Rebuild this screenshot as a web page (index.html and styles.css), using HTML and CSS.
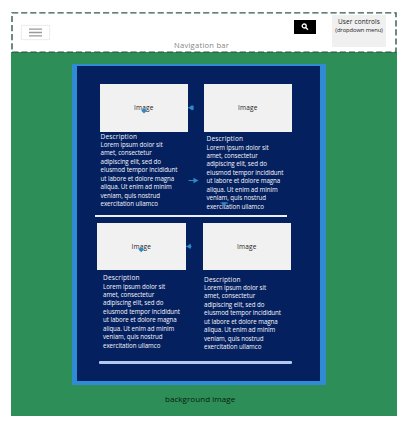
FILE: index.html
```html
<!DOCTYPE html>
<html lang="en">
<head>
<meta charset="utf-8">
<title>Page wireframe</title>
<link rel="stylesheet" href="styles.css">
</head>
<body>
<div class="page">
  <header class="nav">
    <svg class="outline" width="386" height="41" viewBox="0 0 386 41"><rect x="1" y=".9" width="384" height="39.2"/></svg>
    <div class="menu"><svg width="13" height="9" viewBox="0 0 13 9"><path d="M0 1.200h13M0 4.500h13M0 7.800h13"/></svg></div>
    <span class="nav-title">Navigation bar</span>
    <div class="search"><svg width="8" height="8" viewBox="0 0 8 8"><circle cx="3.2" cy="3" r="2"/><path d="M4.7 4.5 7 6.7"/></svg></div>
    <div class="user"><b>User controls</b><small>(dropdown menu)</small></div>
  </header>
  <main class="backdrop">
    <section class="panel">
      <div class="row first">
        <article class="card">
          <div class="image">Image</div>
          <div class="copy"><h2>Description</h2><p>Lorem ipsum dolor sit<br>amet, consectetur<br>adipiscing elit, sed do<br>eiusmod tempor incididunt<br>ut labore et dolore magna<br>aliqua. Ut enim ad minim<br>veniam, quis nostrud<br>exercitation ullamco</p></div>
        </article>
        <article class="card">
          <div class="image">Image</div>
          <div class="copy"><h2>Description</h2><p>Lorem ipsum dolor sit<br>amet, consectetur<br>adipiscing elit, sed do<br>eiusmod tempor incididunt<br>ut labore et dolore magna<br>aliqua. Ut enim ad minim<br>veniam, quis nostrud<br>exercitation ullamco</p></div>
        </article>
      </div>
      <div class="rule"></div>
      <div class="row second">
        <article class="card">
          <div class="image">Image</div>
          <div class="copy"><h2>Description</h2><p>Lorem ipsum dolor sit<br>amet, consectetur<br>adipiscing elit, sed do<br>eiusmod tempor incididunt<br>ut labore et dolore magna<br>aliqua. Ut enim ad minim<br>veniam, quis nostrud<br>exercitation ullamco</p></div>
        </article>
        <article class="card">
          <div class="image">Image</div>
          <div class="copy"><h2>Description</h2><p>Lorem ipsum dolor sit<br>amet, consectetur<br>adipiscing elit, sed do<br>eiusmod tempor incididunt<br>ut labore et dolore magna<br>aliqua. Ut enim ad minim<br>veniam, quis nostrud<br>exercitation ullamco</p></div>
        </article>
      </div>
      <div class="rule last"></div>
      <svg class="arrows" width="243" height="315" viewBox="77 66 243 315">
        <path d="M188 107.700h5.500M186 246.400h5.500M188.500 180.500h6M144 108v2M141 247v2M220.500 203h7.500"/>
        <path class="head" d="m188.500 107.700 3-2.200h2v4.400h-2zM186.500 246.400l3-2.200h1.500v4.400h-1.500zM193.500 177.800l5 2.700-5 2.700zM141.300 110.800l1.200-1.500h3l1.200 1.500-2.700 2.700zM138.500 249.600l1.200-1.500h3l1.200 1.500-2.700 2.700zM221.500 202.500h5.500l-2.500 3.500z"/>
      </svg>
    </section>
    <div class="caption">background image</div>
  </main>
</div>
</body>
</html>
```
FILE: styles.css
```css
* { box-sizing: border-box; }
body { margin: 0; background: #fff; font-family: "Open Sans", sans-serif; }
.page { width: 386px; margin: 11.5px 0 0 11px; }
.nav { position: relative; height: 40.500px; display: flex; align-items: flex-start; background: #fff; }
.outline { position: absolute; left: 0; top: 0; z-index: 1; }
.outline rect { fill: none; stroke: #305b48; stroke-width: 1.4; stroke-dasharray: 6.2 2.9; }
.menu { width: 29px; height: 15px; margin: 13.500px 0 0 9.500px; border: 1px solid #eee; display: flex; align-items: center; justify-content: center; box-shadow: 0 0 1px #eee; }
.menu svg { stroke: #999; stroke-width: 1.300; }
.nav-title { width: 60px; margin: 28px 0 0 124.500px; font-size: 7.600px; line-height: 11px; letter-spacing: .24px; color: #858585; white-space: nowrap; }
.search { width: 22px; height: 14px; margin: 8.500px 0 0 60px; background: #000; display: flex; align-items: center; justify-content: center; }
.search svg { fill: none; stroke: #fff; stroke-width: 1.3; }
.user { width: 54px; height: 32px; margin: 3.500px 0 0 16px; padding-top: 2px; background: #f0f0f0; text-align: center; color: #222; white-space: nowrap; }
.user b, .user small { display: block; font-weight: 400; }
.user b { font-size: 6.500px; line-height: 9px; letter-spacing: .12px; }
.user small { font-size: 5.800px; line-height: 8px; letter-spacing: -.08px; }
.backdrop { width: 385.500px; height: 364px; padding: 12px 0 0 61px; background: #2d8e57; }
.panel { position: relative; width: 254px; height: 321px; padding-top: 18px; background: #04205f; border: solid #308bd5; border-width: 2px 6px 4px 5px; }
.row { display: flex; gap: 15.500px; }
.first { height: 131px; margin-left: 22.500px; }
.second { height: 138.500px; margin: 5.500px 0 0 20px; gap: 17px; }
.card { width: 88.500px; flex: none; }
.image { height: 47.500px; background: #f1f1f1; color: #222; font-size: 6.500px; letter-spacing: .2px; display: flex; align-items: center; justify-content: center; }
.copy { padding-left: 1px; color: #f4f6fb; white-space: nowrap; }
.first .card + .card .copy { padding: 2.500px 0 0 3px; }
.second .card .copy { padding: 3px 0 0 6px; }
.second .card + .card .copy { padding: 4.500px 0 0 1.500px; }
h2 { margin: 0; font-size: 6.500px; line-height: 9px; font-weight: 400; letter-spacing: .18px; }
p { margin: 0; padding-top: .5px; font-size: 6.200px; line-height: 8.450px; letter-spacing: -.06px; }
.rule { width: 192px; height: 2px; margin-left: 18px; background: #e7effc; }
.last { width: 193px; margin-left: 22px; background: #b2c9ef; height: 2.500px; border-radius: 1px; }
.arrows { position: absolute; left: 0; top: 0; }
.arrows path { fill: none; stroke: #2d8bc9; stroke-width: 1; }
.arrows .head { fill: #2d8bc9; stroke: none; }
.caption { width: 80px; margin: 8px 0 0 93px; font-size: 8px; line-height: 12px; letter-spacing: .06px; color: #061c10; white-space: nowrap; }
```
